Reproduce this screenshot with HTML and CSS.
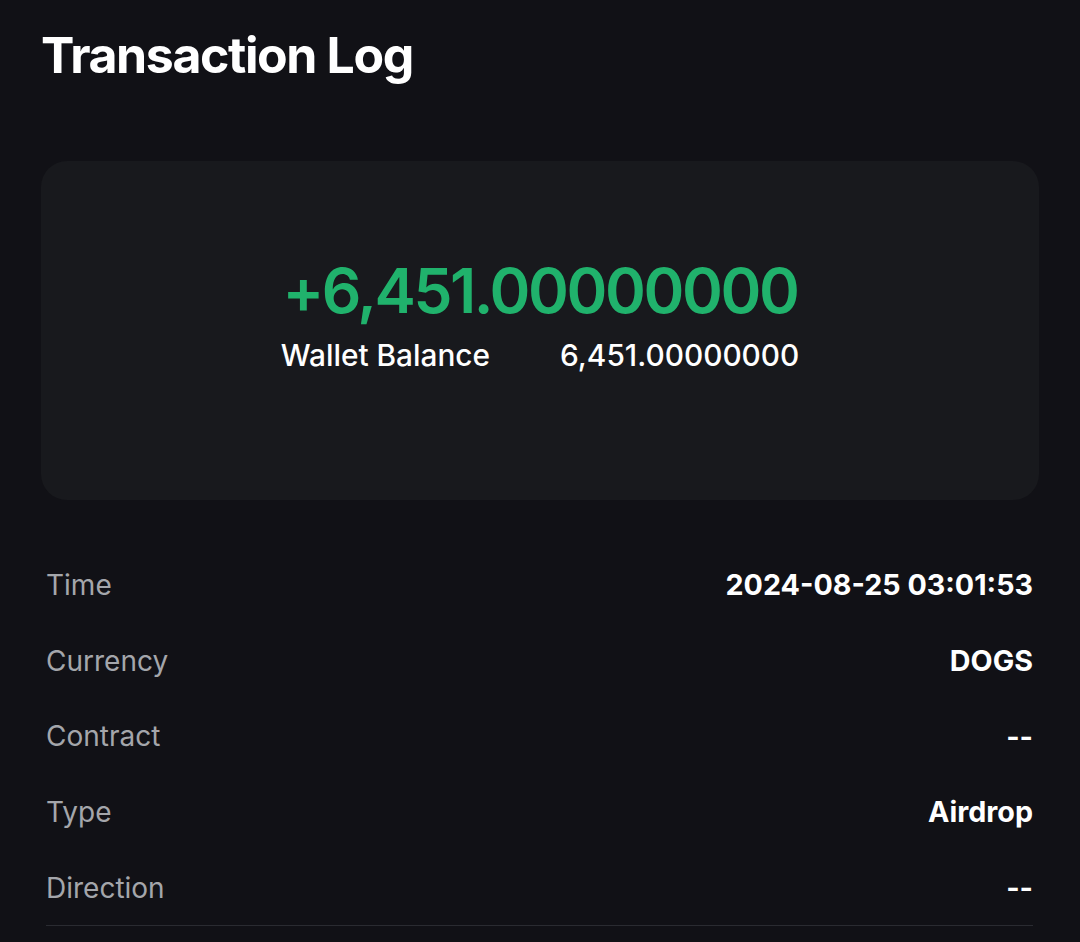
FILE: index.html
```html
<!DOCTYPE html>
<html>
<head>
<meta charset="utf-8">
<link rel="stylesheet" href="styles.css">
</head>
<body>
<main class="page">
  <h1 class="title">Transaction Log</h1>
  <section class="card">
    <div class="amount">+6,451.00000000</div>
    <div class="balance">
      <span class="balance-label">Wallet Balance</span>
      <span class="balance-value">6,451.00000000</span>
    </div>
  </section>
  <dl class="details">
    <div class="row"><dt>Time</dt><dd>2024-08-25 03:01:53</dd></div>
    <div class="row"><dt>Currency</dt><dd>DOGS</dd></div>
    <div class="row"><dt>Contract</dt><dd>--</dd></div>
    <div class="row"><dt>Type</dt><dd>Airdrop</dd></div>
    <div class="row"><dt>Direction</dt><dd>--</dd></div>
  </dl>
</main>
</body>
</html>
```
FILE: styles.css
```css
html, body {
  margin: 0;
  padding: 0;
  background: #111116;
  height: 100%;
  overflow: hidden;
}
body {
  font-family: "Inter", "Noto Sans", sans-serif;
  color: #ffffff;
}
.page {
  padding: 0 41px;
}
.title {
  margin: 0;
  padding-top: 24px;
  font-size: 50px;
  font-weight: 700;
  line-height: 62px;
  letter-spacing: -1.4px;
}
.card {
  margin-top: 75px;
  height: 339px;
  background: #18191d;
  border-radius: 26px;
  display: flex;
  flex-direction: column;
  align-items: center;
  padding-top: 92px;
  box-sizing: border-box;
}
.amount {
  color: #20b26c;
  font-size: 62px;
  font-weight: 600;
  line-height: 76px;
  letter-spacing: -2.4px;
}
.balance {
  display: flex;
  gap: 70px;
  font-size: 29.8px;
  font-weight: 500;
  line-height: 36px;
  margin-top: 8px;
}
.details {
  margin: 47px 6px 0 5px;
  padding: 0;
  border-bottom: 1px solid #2a2b31;
}
.row {
  display: flex;
  justify-content: space-between;
  align-items: center;
  height: 75.7px;
  font-size: 28px;
}
.row dt {
  color: #a4a6ab;
  font-weight: 400;
}
.row dd {
  margin: 0;
  font-weight: 700;
  color: #ffffff;
  font-size: 28.7px;
}
```
